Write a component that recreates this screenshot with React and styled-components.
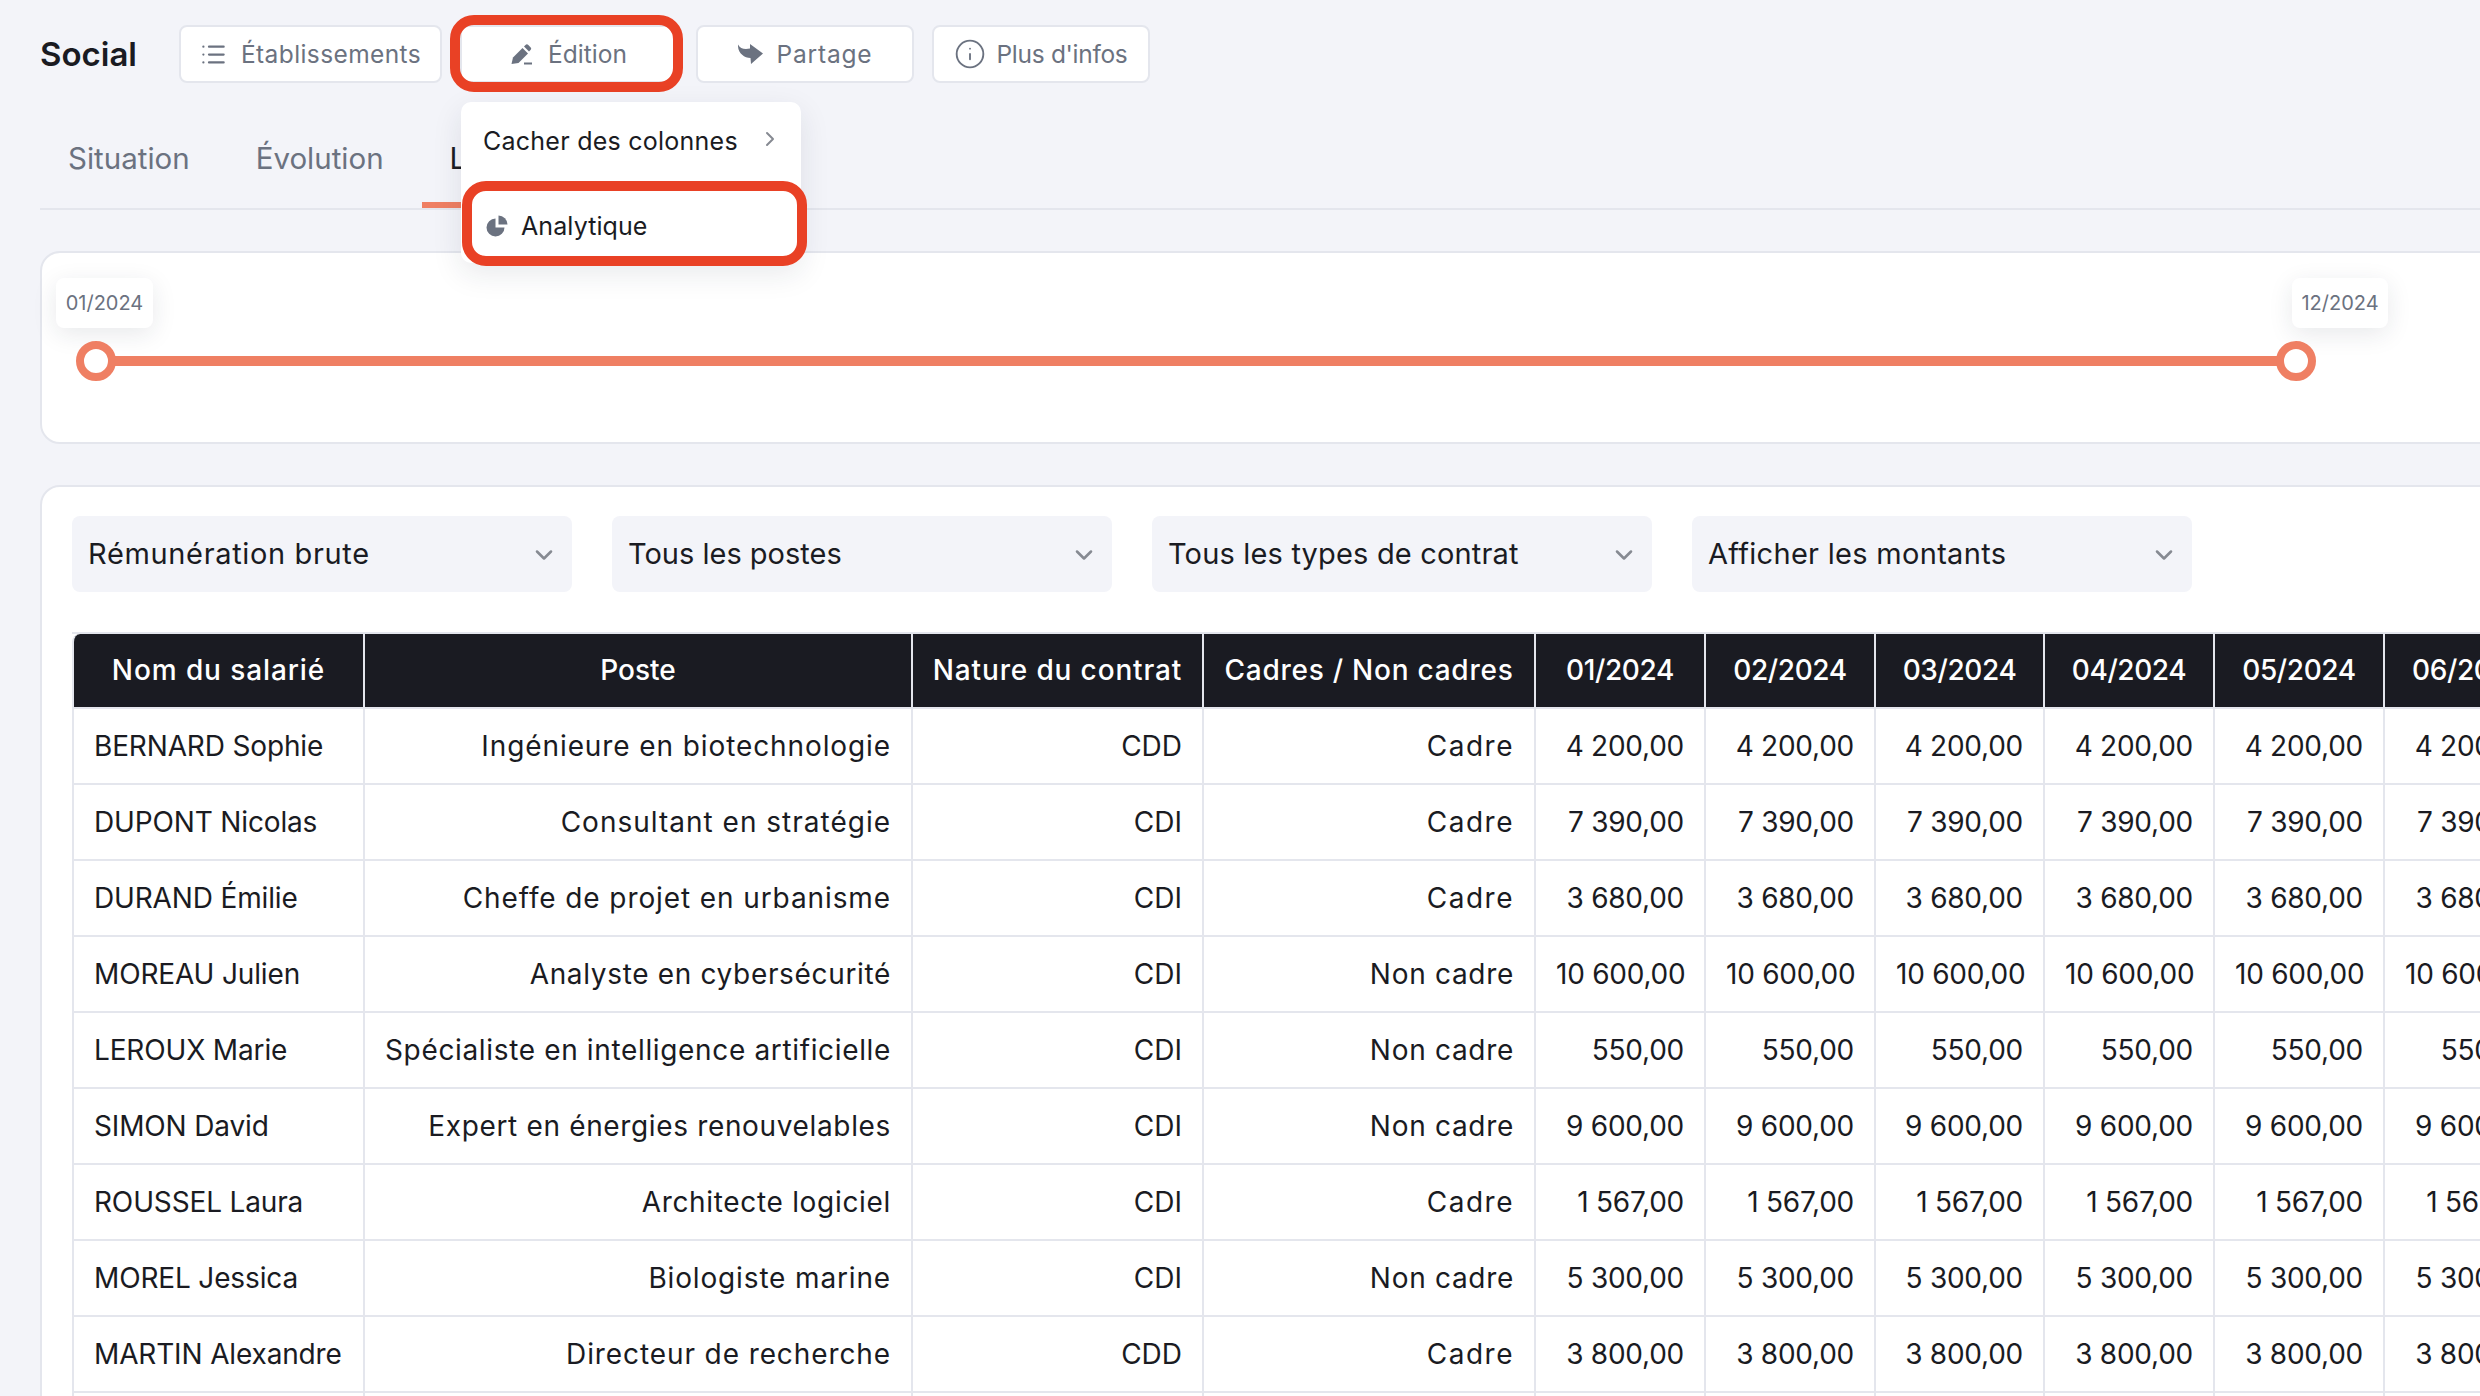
import React from "react"
import styled, { createGlobalStyle } from "styled-components"
import { ChevronDown, ChevronRight, Info, List } from "lucide-react"

const GlobalStyle = createGlobalStyle`
  html, body {
    margin: 0;
    padding: 0;
    background: #f3f4f9;
    font-family: Inter, "Noto Sans", "Liberation Sans", sans-serif;
  }
`

const Page = styled.div`
  width: 2480px;
  height: 1396px;
  overflow: hidden;
  box-sizing: border-box;
  padding: 25px 0 0 40px;
  background: #f3f4f9;
`

const TopBar = styled.div`
  display: flex;
  align-items: center;
  height: 58px;
`

const Title = styled.h1`
  width: 139px;
  margin: 0;
  font-size: 33px;
  font-weight: 600;
  color: #1a1b22;
`

const Buttons = styled.div`
  display: flex;
  gap: 18px;
`

const ButtonSlot = styled.div`
  position: relative;
`

const Button = styled.button`
  display: flex;
  align-items: center;
  justify-content: center;
  gap: ${(p) => p.$gap}px;
  box-sizing: border-box;
  width: ${(p) => p.$width}px;
  height: 58px;
  padding: 0;
  background: #fff;
  border: 2px solid #e4e6ed;
  border-radius: 8px;
  font: inherit;
  font-size: 24.5px;
  letter-spacing: ${(p) => p.$spacing || 0}px;
  color: #6b7280;
`

const Ring = styled.div`
  position: absolute;
  box-sizing: border-box;
  border: 10px solid #e94125;
  border-radius: 24px;
  pointer-events: none;
`

const EditRing = styled(Ring)`
  left: -10px;
  top: -10px;
  width: 233px;
  height: 77px;
`

const Menu = styled.div`
  position: absolute;
  z-index: 5;
  left: 1px;
  top: 77px;
  box-sizing: border-box;
  width: 340px;
  height: 161px;
  background: #fff;
  border-radius: 10px;
  box-shadow: 0 10px 30px rgba(30, 35, 60, 0.1);
`

const MenuRow = styled.div`
  display: flex;
  align-items: center;
  height: 78px;
  padding-left: 22px;
  font-size: 25px;
  letter-spacing: 0.25px;
  color: #1a1b22;
  svg {
    margin-left: 20px;
    margin-top: -4px;
    color: #868a92;
  }
`

const AnalyticRow = styled.div`
  display: flex;
  align-items: center;
  gap: 13px;
  height: 46px;
  margin-top: 23px;
  padding-left: 25px;
  font-size: 25px;
  letter-spacing: 0.1px;
  color: #1a1b22;
`

const AnalyticRing = styled(Ring)`
  left: 1px;
  top: 79px;
  width: 345px;
  height: 85px;
`

const Tabs = styled.div`
  display: flex;
  gap: 10px;
  width: 2520px;
  height: 127px;
  box-sizing: border-box;
  padding-top: 55px;
  border-bottom: 2px solid #e4e6ed;
`

const Tab = styled.div`
  height: 70px;
  padding: 0 28px;
  box-sizing: border-box;
  font-size: 29.5px;
  line-height: 40px;
  color: ${(p) => (p.$active ? "#1a1b22" : "#6b7280")};
  border-bottom: ${(p) => (p.$active ? "6px solid #ef7f63" : "none")};
`

const Card = styled.section`
  box-sizing: border-box;
  width: 2520px;
  background: #fff;
  border: 2px solid #e4e6ed;
  border-radius: 20px;
`

const SliderCard = styled(Card)`
  height: 193px;
  margin-top: 41px;
  padding: 103px 0 0 53px;
`

const Track = styled.div`
  position: relative;
  width: 2202px;
  height: 10px;
  background: #ef7f63;
`

const Thumb = styled.div`
  position: absolute;
  top: -15px;
  left: ${(p) => p.$left}px;
  box-sizing: border-box;
  width: 40px;
  height: 40px;
  background: #fff;
  border: 8px solid #ef7f63;
  border-radius: 50%;
`

const Bubble = styled.div`
  position: absolute;
  top: -78px;
  left: ${(p) => p.$left}px;
  width: ${(p) => p.$width}px;
  height: 50px;
  line-height: 50px;
  text-align: center;
  background: #fff;
  border-radius: 8px;
  box-shadow: 0 6px 24px rgba(30, 35, 60, 0.1);
  font-size: 20px;
  color: #6b7280;
`

const TableCard = styled(Card)`
  height: 1000px;
  margin-top: 41px;
  padding: 29px 0 0 30px;
  overflow: hidden;
`

const Filters = styled.div`
  display: flex;
  gap: 40px;
`

const Select = styled.div`
  display: flex;
  align-items: center;
  justify-content: space-between;
  box-sizing: border-box;
  width: 500px;
  height: 76px;
  padding: 0 14px 2px 16px;
  background: #f3f4f9;
  border-radius: 8px;
  font-size: 29px;
  letter-spacing: ${(p) => p.$spacing}px;
  color: #1a1b22;
  svg {
    margin-top: 4px;
    color: #868a92;
  }
`

const Table = styled.table`
  table-layout: fixed;
  width: 2483px;
  margin-top: 40px;
  border-collapse: separate;
  border-spacing: 0;
  border-top: 2px solid #e4e6ed;
  font-size: 28px;
  color: #1a1b22;
`

const Head = styled.th`
  box-sizing: border-box;
  height: 75px;
  padding: 0 10px 1px;
  background: #1a1b22;
  border-right: 2px solid #e4e6ed;
  border-bottom: 2px solid #e4e6ed;
  font-weight: 500;
  text-align: center;
  letter-spacing: ${(p) => p.$spacing || 0}px;
  color: #fff;
  white-space: nowrap;
  &:first-child {
    border-left: 2px solid #e4e6ed;
    border-top-left-radius: 8px;
  }
`

const Cell = styled.td`
  box-sizing: border-box;
  height: 76px;
  padding: 0 20px;
  background: #fff;
  border-right: 2px solid #e4e6ed;
  border-bottom: 2px solid #e4e6ed;
  text-align: ${(p) => (p.$left ? "left" : "right")};
  letter-spacing: ${(p) => p.$spacing || 0}px;
  white-space: nowrap;
  &:first-child {
    border-left: 2px solid #e4e6ed;
  }
`

const PencilIcon = () => (
  <svg width="21" height="21" viewBox="0 0 21 21" fill="#6b7280">
    <path d="M0.5 20 L2 13.5 L11.5 4 L17 9.5 L7.5 19 Z" />
    <path d="M13 2.5 L14.5 1 a2 2 0 0 1 2.8 0 l2.2 2.2 a2 2 0 0 1 0 2.8 L18 7.5 Z" />
    <rect x="13" y="18.5" width="8" height="2" />
  </svg>
)

const ShareIcon = () => (
  <svg width="25" height="20" viewBox="0 0 25 20" fill="#6b7280">
    <path d="M0 0.5 C2 5 7 5.5 12 4.5 L12 0 L25 9.5 L13 20 L12.5 14 C6 14 -0.5 9 0 0.5 Z" />
  </svg>
)

const PieIcon = () => (
  <svg width="22" height="22" viewBox="0 0 22 22" fill="#6b7280">
    <path d="M9.5 3.5 A9 9 0 1 0 18.5 12.5 H9.5 Z" />
    <path d="M12.5 0.5 A9 9 0 0 1 21.5 9.5 H12.5 Z" />
  </svg>
)

const months = [
  { label: "01", width: 170 },
  { label: "02", width: 170 },
  { label: "03", width: 169 },
  { label: "04", width: 170 },
  { label: "05", width: 170 },
  { label: "06", width: 170 },
]

const rows = [
  { name: "BERNARD Sophie", job: "Ingénieure en biotechnologie", jobSpacing: 0.9, contract: "CDD", status: "Cadre", amount: "4 200,00" },
  { name: "DUPONT Nicolas", job: "Consultant en stratégie", jobSpacing: 1, contract: "CDI", status: "Cadre", amount: "7 390,00" },
  { name: "DURAND Émilie", job: "Cheffe de projet en urbanisme", jobSpacing: 0.9, contract: "CDI", status: "Cadre", amount: "3 680,00" },
  { name: "MOREAU Julien", job: "Analyste en cybersécurité", jobSpacing: 0.66, contract: "CDI", status: "Non cadre", amount: "10 600,00" },
  { name: "LEROUX Marie", job: "Spécialiste en intelligence artificielle", jobSpacing: 0.65, contract: "CDI", status: "Non cadre", amount: "550,00" },
  { name: "SIMON David", job: "Expert en énergies renouvelables", jobSpacing: 0.65, contract: "CDI", status: "Non cadre", amount: "9 600,00" },
  { name: "ROUSSEL Laura", job: "Architecte logiciel", jobSpacing: 0.68, contract: "CDI", status: "Cadre", amount: "1 567,00" },
  { name: "MOREL Jessica", job: "Biologiste marine", jobSpacing: 0.85, contract: "CDI", status: "Non cadre", amount: "5 300,00" },
  { name: "MARTIN Alexandre", job: "Directeur de recherche", jobSpacing: 0.9, contract: "CDD", status: "Cadre", amount: "3 800,00" },
]

const filters = [
  { label: "Rémunération brute", spacing: 0.65 },
  { label: "Tous les postes", spacing: 0 },
  { label: "Tous les types de contrat", spacing: 0.17 },
  { label: "Afficher les montants", spacing: 0.3 },
]

const App = () => {
  return (
    <Page>
      <GlobalStyle />
      <TopBar>
        <Title>Social</Title>
        <Buttons>
          <Button $width={263} $gap={14} $spacing={0.4}>
            <List size={27} strokeWidth={2} />
            Établissements
          </Button>
          <ButtonSlot>
            <Button $width={218} $gap={16}>
              <PencilIcon />
              Édition
            </Button>
            <EditRing />
            <Menu>
              <MenuRow>
                Cacher des colonnes
                <ChevronRight size={24} strokeWidth={2} />
              </MenuRow>
              <AnalyticRow>
                <PieIcon />
                Analytique
              </AnalyticRow>
              <AnalyticRing />
            </Menu>
          </ButtonSlot>
          <Button $width={218} $gap={14} $spacing={0.8}>
            <ShareIcon />
            Partage
          </Button>
          <Button $width={218} $gap={10} $spacing={-0.3}>
            <Info size={32} strokeWidth={1.4} />
            Plus d'infos
          </Button>
        </Buttons>
      </TopBar>

      <Tabs>
        <Tab>Situation</Tab>
        <Tab>Évolution</Tab>
        <Tab $active>Liste</Tab>
      </Tabs>

      <SliderCard>
        <Track>
          <Bubble $left={-39} $width={97}>01/2024</Bubble>
          <Bubble $left={2197} $width={96}>12/2024</Bubble>
          <Thumb $left={-19} />
          <Thumb $left={2181} />
        </Track>
      </SliderCard>

      <TableCard>
        <Filters>
          {filters.map((filter) => (
            <Select key={filter.label} $spacing={filter.spacing}>
              {filter.label}
              <ChevronDown size={28} strokeWidth={2.2} />
            </Select>
          ))}
        </Filters>
        <Table>
          <colgroup>
            <col style={{ width: 293 }} />
            <col style={{ width: 548 }} />
            <col style={{ width: 291 }} />
            <col style={{ width: 332 }} />
            {months.map((m) => (
              <col key={m.label} style={{ width: m.width }} />
            ))}
          </colgroup>
          <thead>
            <tr>
              <Head $spacing={0.9}>Nom du salarié</Head>
              <Head>Poste</Head>
              <Head $spacing={0.85}>Nature du contrat</Head>
              <Head $spacing={0.75}>Cadres / Non cadres</Head>
              {months.map((m) => (
                <Head key={m.label} $spacing={-0.4}>{m.label}/2024</Head>
              ))}
            </tr>
          </thead>
          <tbody>
            {rows.map((row) => (
              <tr key={row.name}>
                <Cell $left $spacing={-0.15}>{row.name}</Cell>
                <Cell $spacing={row.jobSpacing}>{row.job}</Cell>
                <Cell>{row.contract}</Cell>
                <Cell $spacing={row.status === "Cadre" ? 1.5 : 0.7}>{row.status}</Cell>
                {months.map((m) => (
                  <Cell key={m.label} $spacing={-0.25}>{row.amount}</Cell>
                ))}
              </tr>
            ))}
            <tr>
              {Array.from({ length: 10 }, (_, i) => (
                <Cell key={i} />
              ))}
            </tr>
          </tbody>
        </Table>
      </TableCard>
    </Page>
  )
}

export default App
